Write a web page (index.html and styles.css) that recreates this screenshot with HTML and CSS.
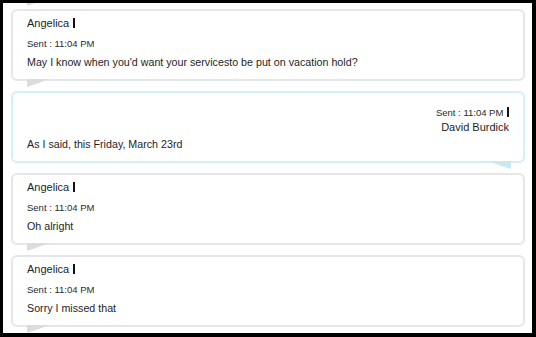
FILE: index.html
```html
<!doctype html>
<html lang="en">
<head>
  <title>Chat history</title>
  <meta charset="utf-8">
  <meta name="viewport" content="width=device-width, initial-scale=1">
  <link rel="stylesheet" href="styles.css">
</head>
<body>
  <div class="chat-frame">
    <div class="chat-list">
      <!-- tail of the previous message, scrolled out of view -->
      <div class="tail-cut"></div>
      <div class="bubble bubble-in">
        <div class="sender">Angelica <span class="bar"></span></div>
        <div class="sent">Sent : 11:04 PM</div>
        <div class="text">May I know when you'd want your servicesto be put on vacation hold?</div>
      </div>
      <div class="bubble bubble-out">
        <div class="sent">Sent : 11:04 PM <span class="bar"></span></div>
        <div class="sender">David Burdick</div>
        <div class="text">As I said, this Friday, March 23rd</div>
      </div>
      <div class="bubble bubble-in">
        <div class="sender">Angelica <span class="bar"></span></div>
        <div class="sent">Sent : 11:04 PM</div>
        <div class="text">Oh alright</div>
      </div>
      <div class="bubble bubble-in">
        <div class="sender">Angelica <span class="bar"></span></div>
        <div class="sent">Sent : 11:04 PM</div>
        <div class="text">Sorry I missed that</div>
      </div>
    </div>
  </div>
</body>
</html>
```

FILE: styles.css
```css
html, body {
  margin: 0;
  height: 100%;
  background-color: #000000;
}

body {
  padding: 3px 4px 4px 3px;
  box-sizing: border-box;
  font-family: "Liberation Sans", Arial, sans-serif;
  color: #222222;
}

.chat-frame {
  height: 100%;
  background-color: #ffffff;
  overflow: hidden;
}

.chat-list {
  display: flex;
  flex-direction: column;
  gap: 10px;
  padding: 0 7px 0 8px;
}

.tail-cut {
  width: 0;
  height: 0;
  margin: 0 0 -7px 16px;
  border-top: 3px solid #dcdcdc;
  border-right: 8px solid transparent;
}

.bubble {
  position: relative;
  flex-shrink: 0;
  border: 2px solid #e6e6e6;
  border-radius: 6px;
  padding: 5px 14px 9px 14px;
  background-color: #ffffff;
}

.bubble::after {
  content: "";
  position: absolute;
  top: 100%;
  width: 0;
  height: 0;
}

.bubble-in::after {
  left: 14px;
  border-top: 8px solid #dcdcdc;
  border-right: 23px solid transparent;
}

.bubble-out {
  border-color: #d3f0f4;
  padding-top: 13px;
  padding-bottom: 9px;
  text-align: right;
}

.bubble-out::after {
  right: 12px;
  border-top: 8px solid #c6eaf0;
  border-left: 24px solid transparent;
}

.sender {
  font-size: 11px;
  line-height: 14px;
  color: #1e1e1e;
}

.sent {
  font-size: 9.5px;
  line-height: 14px;
  color: #2a2a2a;
}

.bubble-in .sent {
  margin-top: 7px;
}

.bar {
  display: inline-block;
  width: 2px;
  height: 10px;
  margin-left: 1px;
  background-color: #111111;
  vertical-align: -1px;
}

.text {
  margin-top: 3px;
  font-size: 10.7px;
  line-height: 16px;
  text-align: left;
  color: #1e1e1e;
}

.bubble-out .text {
  margin-top: 2px;
}
```
